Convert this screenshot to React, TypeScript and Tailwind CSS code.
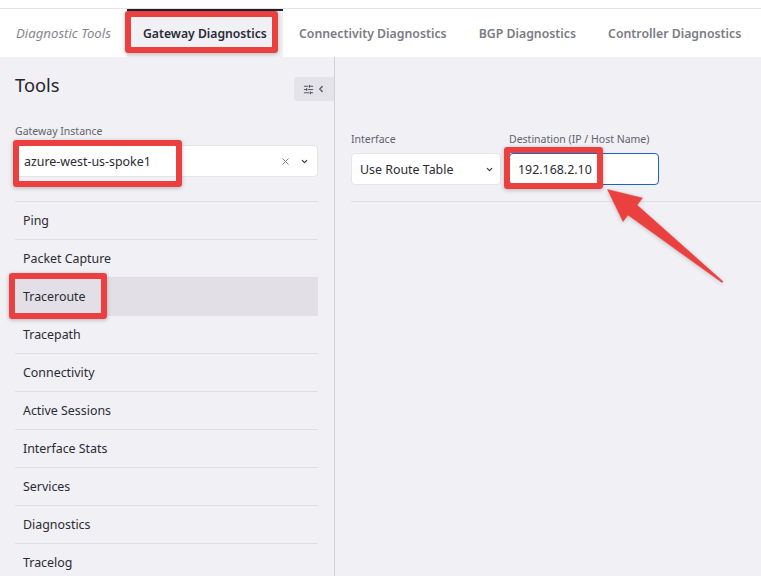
import { ChevronDown, ChevronLeft, SlidersHorizontal, X } from 'lucide-react';

const tools = ['Ping', 'Packet Capture', 'Traceroute', 'Tracepath', 'Connectivity', 'Active Sessions', 'Interface Stats', 'Services', 'Diagnostics', 'Tracelog'];
const tabs = ['Connectivity Diagnostics', 'BGP Diagnostics', 'Controller Diagnostics'];

// Red annotation box drawn on top of the screenshot
const Callout = ({ className }: { className: string }) => (
  <div className={`absolute rounded-[3px] border-[6px] border-[#ea4040] shadow-[0_1px_4px_rgba(0,0,0,0.25)] ${className}`} />
);

export default function App() {
  return (
    <div className="relative h-[576px] w-[761px] overflow-hidden bg-[#f0f0f5] font-['Noto_Sans',sans-serif] text-[12.4px] text-[#2b2b33]">
      <div className="h-[9px] border-b border-[#e4e4e8] bg-white" />

      {/* Tab bar */}
      <div className="flex h-[48px] items-center whitespace-nowrap bg-white pt-[2px]">
        <span className="w-[127px] pl-[16px] text-[13.2px] italic text-[#85858f]">Diagnostic Tools</span>
        <div className="-mt-[2px] flex h-[48px] w-[156px] items-center border-t-2 border-[#22222e] bg-[#f0f0f5] pl-[16px] text-[12.2px] font-semibold text-[#2a2a38]">
          Gateway Diagnostics
        </div>
        <div className="flex gap-[32px] pl-[16px] text-[12.3px] font-semibold text-[#7b7b86]">
          {tabs.map((tab) => (
            <span key={tab}>{tab}</span>
          ))}
        </div>
      </div>

      <div className="flex h-[519px]">
        {/* Left tools panel */}
        <aside className="w-[335px] shrink-0 border-r border-[#d2d2d8] pl-[15px] pr-[16px]">
          <div className="flex h-[66px] items-start justify-between">
            <h1 className="mt-[15px] text-[18.3px] leading-[26px] text-[#26262e]">Tools</h1>
            <button className="-mr-[16px] mt-[20px] flex h-[24px] w-[40px] items-center justify-center gap-[2px] rounded-l-[3px] bg-[#e3e3e9] text-[#55555f]">
              <SlidersHorizontal size={11} strokeWidth={2.5} />
              <ChevronLeft size={10} strokeWidth={3} />
            </button>
          </div>
          <label className="block h-[22px] text-[10.5px] leading-[16px] text-[#62626c]">Gateway Instance</label>
          <div className="flex h-[32px] items-center justify-between rounded-[4px] border border-[#e4e4ea] bg-white pl-[8px] pr-[8px]">
            <span className="pt-[2px]">azure-west-us-spoke1</span>
            <div className="flex items-center gap-[9px] text-[#77777f]">
              <X size={11} />
              <ChevronDown size={9} strokeWidth={3} className="text-[#33333b]" />
            </div>
          </div>
          <ul className="mt-[24px] border-t border-[#dedee4]">
            {tools.map((tool) => (
              <li
                key={tool}
                className={`flex h-[38px] items-center pl-[8px] ${tool === 'Traceroute' ? 'bg-[#e2e0e6]' : 'border-b border-[#dedee4] pt-[2px]'}`}
              >
                {tool}
              </li>
            ))}
          </ul>
        </aside>

        {/* Traceroute form */}
        <main className="flex-1 pl-[16px]">
          <div className="flex h-[145px] items-start gap-[8px] border-b border-[#dedee4] pt-[74px]">
            <div className="w-[150px]">
              <label className="block h-[22px] text-[10.5px] leading-[16px] text-[#62626c]">Interface</label>
              <div className="flex h-[32px] items-center justify-between rounded-[4px] border border-[#e4e4ea] bg-white pl-[8px] pr-[6px]">
                <span className="pt-[2px]">Use Route Table</span>
                <ChevronDown size={9} strokeWidth={3} className="text-[#33333b]" />
              </div>
            </div>
            <div className="w-[150px]">
              <label className="block h-[22px] whitespace-nowrap text-[10.5px] leading-[16px] text-[#62626c]">Destination (IP / Host Name)</label>
              <div className="flex h-[32px] items-center rounded-[4px] border border-[#1d63c4] bg-white pl-[8px] pt-[2px]">192.168.2.10</div>
            </div>
          </div>
        </main>
      </div>

      {/* Annotations */}
      <Callout className="left-[125px] top-[11px] h-[42px] w-[153px]" />
      <Callout className="left-[13px] top-[140px] h-[47px] w-[169px]" />
      <Callout className="left-[9px] top-[273px] h-[46px] w-[98px]" />
      <Callout className="left-[504px] top-[147px] h-[42px] w-[99px]" />
      <svg className="absolute left-0 top-0" width="761" height="576" style={{ filter: 'drop-shadow(0 1px 2px rgba(0,0,0,0.2))' }}>
        <path d="M607.5 189.5 L642.5 198 L637 205 L723 281.5 L722 282.5 L628 215 L623 221.5 Z" fill="#ea4040" stroke="#ea4040" strokeLinejoin="round" strokeWidth="0.5" />
      </svg>
    </div>
  );
}
